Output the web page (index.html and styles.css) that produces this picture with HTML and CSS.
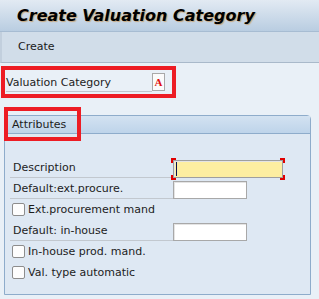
FILE: index.html
```html
<!DOCTYPE html>
<html>
<head>
    <title>Create Valuation Category</title>
    <link rel="stylesheet" href="styles.css">
</head>
<body>
    <!-- Title bar -->
    <div class="title-bar">
        <h1>Create Valuation Category</h1>
    </div>

    <!-- Toolbar -->
    <div class="toolbar">
        <span class="tool-btn">Create</span>
    </div>

    <div class="content">
        <!-- Key field -->
        <div class="key-row">
            <div class="key-field">
                <span class="key-label">Valuation Category</span>
                <span class="key-icon">A</span>
            </div>
        </div>

        <!-- Attributes group -->
        <div class="group">
            <div class="group-head">Attributes</div>
            <div class="mark"></div>
            <div class="group-body">
                <div class="field-row">
                    <span class="field-label">Description</span>
                    <span class="input focused"><span class="caret"></span></span>
                </div>
                <div class="field-row">
                    <span class="field-label">Default:ext.procure.</span>
                    <span class="input short"></span>
                </div>
                <div class="check-row">
                    <span class="check"></span>
                    <span>Ext.procurement mand</span>
                </div>
                <div class="field-row">
                    <span class="field-label">Default: in-house</span>
                    <span class="input short"></span>
                </div>
                <div class="check-row">
                    <span class="check"></span>
                    <span>In-house prod. mand.</span>
                </div>
                <div class="check-row">
                    <span class="check"></span>
                    <span>Val. type automatic</span>
                </div>
            </div>
        </div>
    </div>
</body>
</html>
```

FILE: styles.css
```css
/* Base */
* {
  padding: 0;
  margin: 0;
  box-sizing: border-box;
}

body {
  font-family: "DejaVu Sans", sans-serif;
  font-size: 11px;
  color: #1c1c1c;
  background: #e9f0f7;
  width: 319px;
  height: 299px;
  overflow: hidden;
}

/* Title bar */
.title-bar {
  height: 32px;
  background: linear-gradient(#e2eaf3, #b9cde1);
  border-bottom: 1px solid #a7bcd2;
  padding-left: 17px;
}

.title-bar h1 {
  font-family: "DejaVu Sans", sans-serif;
  font-size: 16px;
  font-weight: bold;
  font-style: italic;
  line-height: 31px;
  color: #000;
  text-shadow: 1px 1px 1px rgba(200, 130, 40, 0.55);
}

/* Toolbar */
.toolbar {
  height: 31px;
  background: #d1dde9;
  border-left: 2px solid #c2cfdd;
  border-bottom: 1px solid #a9b9ca;
  padding-left: 16px;
  line-height: 30px;
}

.tool-btn {
  font-size: 11px;
  color: #1a1a1a;
}

/* Content */
.content {
  padding-top: 3px;
}

.key-row {
  margin-left: 1px;
  width: 175px;
  height: 32px;
  border: 4px solid #ed1c24;
  padding-left: 1px;
  padding-top: 3px;
}

.key-field {
  display: flex;
  align-items: flex-end;
  width: 159px;
  height: 19px;
}

.key-label {
  flex: 1;
  height: 19px;
  border-bottom: 1px solid #c0c6cc;
  line-height: 19px;
}

.key-icon {
  width: 13px;
  height: 18px;
  margin-bottom: 1px;
  border: 1px solid #a9a9a9;
  background: #fbfbfb;
  color: #e01010;
  font-family: "Liberation Serif", serif;
  font-weight: bold;
  font-size: 11px;
  line-height: 17px;
  text-align: center;
}

/* Group box */
.group {
  position: relative;
  margin: 17px 0 0 4px;
  width: 307px;
  height: 180px;
  border: 1px solid #8eaccb;
  border-radius: 2px 4px 0 0;
  background: #dee8f3;
}

.group-head {
  height: 18px;
  background: linear-gradient(#d3e2f1, #bed4ea);
  border-bottom: 1px solid #8eaccb;
  padding-left: 7px;
  line-height: 17px;
  font-size: 11px;
}

/* red highlight over the group header */
.mark {
  position: absolute;
  left: -1px;
  top: -9px;
  width: 77px;
  height: 34px;
  border: 4px solid #ed1c24;
}

.group-body {
  padding: 23px 0 0 5px;
}

.field-row {
  display: flex;
  align-items: flex-end;
  height: 21px;
}

.field-label {
  width: 163px;
  height: 21px;
  border-bottom: 1px solid #c2c8cf;
  padding-left: 3px;
  line-height: 21px;
}

.input {
  width: 110px;
  height: 18px;
  background: #fff;
  border: 1px solid #a8a8a8;
  box-shadow: inset 1px 1px 0 #e4e4e4;
}

.input.short {
  width: 74px;
}

.input.focused {
  position: relative;
  background: #fdeea1;
  border-color: #9f9f9f;
}

/* red corner brackets around the focused field */
.input.focused::before {
  content: "";
  position: absolute;
  left: -3px;
  right: -3px;
  top: -3px;
  bottom: -3px;
  background:
    linear-gradient(#e00000, #e00000) left top / 5px 2px no-repeat,
    linear-gradient(#e00000, #e00000) left top / 2px 5px no-repeat,
    linear-gradient(#e00000, #e00000) right top / 5px 2px no-repeat,
    linear-gradient(#e00000, #e00000) right top / 2px 5px no-repeat,
    linear-gradient(#e00000, #e00000) left bottom / 5px 2px no-repeat,
    linear-gradient(#e00000, #e00000) left bottom / 2px 5px no-repeat,
    linear-gradient(#e00000, #e00000) right bottom / 5px 2px no-repeat,
    linear-gradient(#e00000, #e00000) right bottom / 2px 5px no-repeat;
}

.caret {
  display: block;
  margin: 1px 0 0 2px;
  width: 1px;
  height: 14px;
  background: #0a1050;
}

.check-row {
  display: flex;
  align-items: center;
  gap: 3px;
  height: 21px;
  padding-left: 2px;
}

.check {
  width: 13px;
  height: 13px;
  border: 1px solid #8d8d8d;
  border-radius: 2px;
  background: #fdfdfd;
}
```
